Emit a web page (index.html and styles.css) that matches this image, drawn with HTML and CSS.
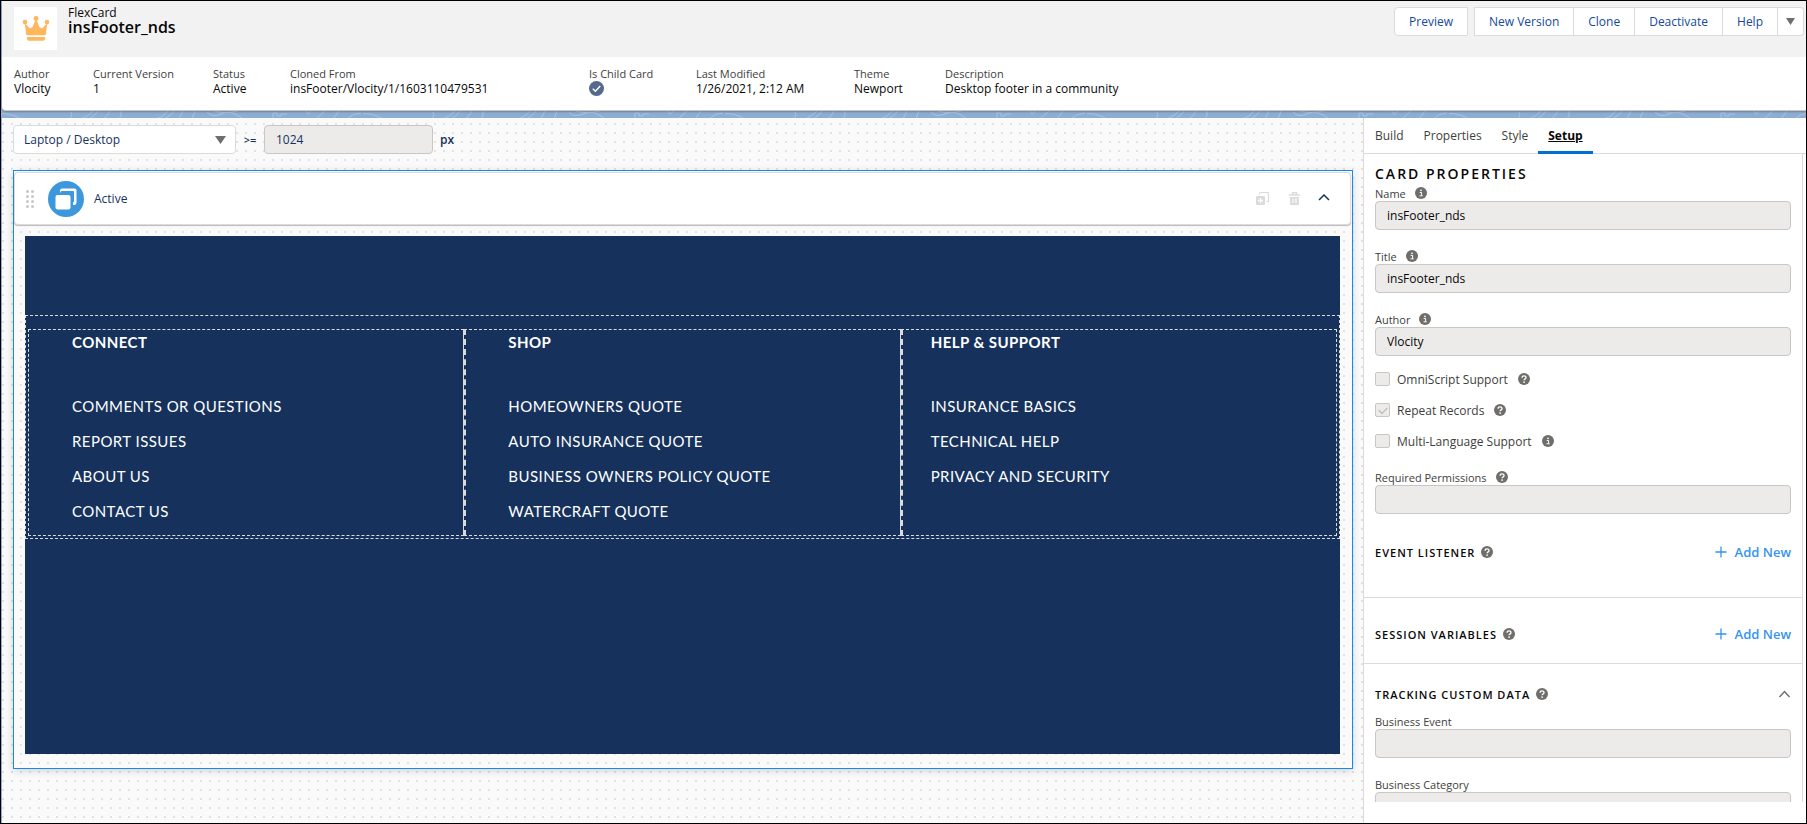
FILE: index.html
```
<!DOCTYPE html>
<html lang="en">
<head>
<meta charset="utf-8">
<title>FlexCard - insFooter_nds</title>
<link rel="stylesheet" href="styles.css">
</head>
<body>
<svg class="sprite" aria-hidden="true">
  <symbol id="info" viewBox="0 0 12 12"><circle cx="6" cy="6" r="6" fill="#706e6b"/><path d="M4.700 5.500h1.900v3M4.500 8.800h3.200" stroke="#fff" stroke-width="1" fill="none"/><circle cx="6" cy="3.300" r=".9" fill="#fff"/></symbol>
  <symbol id="help" viewBox="0 0 12 12"><circle cx="6" cy="6" r="6" fill="#706e6b"/><path d="M4.100 4.700c0-2.400 3.900-2.400 3.900 0C8 6 6.100 5.800 6.100 7.300" stroke="#fff" stroke-width="1.300" fill="none"/><circle cx="6.100" cy="9.100" r=".9" fill="#fff"/></symbol>
  <symbol id="plus" viewBox="0 0 12 12"><path d="M6 .5v11M.5 6h11" stroke="#3693f0" stroke-width="1.300"/></symbol>
</svg>

<div class="app">
  <header class="top">
    <div class="title-row">
      <div class="logo">
        <svg width="28" height="28" viewBox="0 0 26 26" fill="#ffb75d"><path d="M2.600 7.200 6.900 12.200 11.600 11 13 4.500l1.400 6.500 4.700 1.200 4.300-5-1.200 10.600q-.1 1-1.200 1H5q-1.100 0-1.200-1z"/><path d="M9 13.500 12.300 5h1.400L17 13.500z"/><circle cx="13" cy="3.200" r="2.300"/><circle cx="2.800" cy="6.600" r="2.200"/><circle cx="23.200" cy="6.600" r="2.200"/><path d="M4.500 20.500h17v1.500q0 2-2 2h-13q-2 0-2-2z"/></svg>
      </div>
      <div class="title">
        <p class="kind">FlexCard</p>
        <h1>insFooter_nds</h1>
      </div>
      <div class="actions">
        <button type="button" class="btn solo">Preview</button>
        <div class="group">
          <button type="button" class="btn">New Version</button>
          <button type="button" class="btn">Clone</button>
          <button type="button" class="btn">Deactivate</button>
          <button type="button" class="btn">Help</button>
          <button type="button" class="btn more" aria-label="More actions"><svg width="9" height="7" viewBox="0 0 9 7"><path d="M0 0h9L4.500 7z" fill="#706e6b"/></svg></button>
        </div>
      </div>
    </div>
    <dl class="facts">
      <div class="w1"><dt>Author</dt><dd>Vlocity</dd></div>
      <div class="w2"><dt>Current Version</dt><dd>1</dd></div>
      <div class="w3"><dt>Status</dt><dd>Active</dd></div>
      <div class="w4"><dt>Cloned From</dt><dd>insFooter/Vlocity/1/1603110479531</dd></div>
      <div class="w5"><dt>Is Child Card</dt><dd><svg class="tick" width="15" height="15" viewBox="0 0 15 15" role="img" aria-label="Yes"><circle cx="7.500" cy="7.500" r="7.500" fill="#54698d"/><path d="M3.800 7.800 6.400 10.300 11.200 5" stroke="#fff" stroke-width="1.400" fill="none"/></svg></dd></div>
      <div class="w6"><dt>Last Modified</dt><dd>1/26/2021, 2:12 AM</dd></div>
      <div class="w7"><dt>Theme</dt><dd>Newport</dd></div>
      <div><dt>Description</dt><dd>Desktop footer in a community</dd></div>
    </dl>
  </header>

  <svg class="strip" aria-hidden="true">
    <defs><pattern id="topo" width="362" height="8" patternUnits="userSpaceOnUse">
      <g fill="none" stroke="#a9c3e2" stroke-width="1">
        <path d="M-2 3q10-2 22 5M68 8q4-2 2-7M80 8q8-3 12-8M88 8q6-3 9-8M102 8q5-3 7-8M118 8q3-3 2-8M155 8q8-2 12-8M163 8q7-3 10-8M178 8l4-8M191 8l3-8M206 1q5 6 14 2 10-5 22 5M213 0q10 3 24 0M272 8V2h4v3h4V3h6M305 0q2 6 5 0M315 8l9-8M332 8l6-8M346 8q6-6 14-6"/>
      </g></pattern></defs>
    <rect width="100%" height="8" fill="url(#topo)"/>
  </svg>

  <div class="body">
    <main class="canvas">
      <div class="viewport-bar">
        <select class="device" aria-label="Device"><option>Laptop / Desktop</option></select>
        <span class="ge">&gt;=</span>
        <input class="size" type="text" value="1024" aria-label="Minimum width" disabled>
        <span class="px">px</span>
      </div>

      <section class="card">
        <div class="state">
          <svg width="8" height="18" viewBox="0 0 8 18" fill="#c9c7c5"><circle cx="1.500" cy="1.500" r="1.500"/><circle cx="6.500" cy="1.500" r="1.500"/><circle cx="1.500" cy="6.500" r="1.500"/><circle cx="6.500" cy="6.500" r="1.500"/><circle cx="1.500" cy="11.500" r="1.500"/><circle cx="6.500" cy="11.500" r="1.500"/><circle cx="1.500" cy="16.500" r="1.500"/><circle cx="6.500" cy="16.500" r="1.500"/></svg>
          <svg class="badge" width="36" height="36" viewBox="0 0 36 36"><circle cx="18" cy="18" r="18" fill="#3c97dd"/><rect x="7.500" y="14" width="15" height="14.500" rx="2" fill="#fff"/><path d="M12 9.500q0-2 2-2h12.500q2 0 2 2v12q0 2-2 2.500h-1.500v-2.500q1-.2 1-1.200V11q0-1-1-1H13.500q-1 0-1 1.500H12z" fill="#fff"/></svg>
          <span class="state-name">Active</span>
          <button type="button" class="icon" aria-label="Clone"><svg width="13" height="13" viewBox="0 0 13 13"><rect x="0" y="4" width="9" height="9" rx="1" fill="#dddbda"/><path d="M3.500 2.500V1.500q0-1 1-1H11.500q1 0 1 1V8.500q0 1-1 1H10.500" fill="none" stroke="#dddbda" stroke-width="1.200"/><path d="M4.500 6v5M2 8.500h5" stroke="#fff" stroke-width="1.300"/></svg></button>
          <button type="button" class="icon" aria-label="Delete"><svg width="11" height="13" viewBox="0 0 11 13"><path d="M0 3h11M3.500 3V.700h4V3" fill="none" stroke="#dddbda" stroke-width="1.400"/><path d="M1 5h9v7q0 1-1 1H2q-1 0-1-1z" fill="#dddbda"/><path d="M4 6.500v4.500M7 6.500v4.500" stroke="#fff" stroke-width="1.200"/></svg></button>
          <button type="button" class="icon" aria-label="Collapse"><svg width="12" height="12" viewBox="0 0 12 12"><path d="M1 7 6 2 11 7" fill="none" stroke="#16325c" stroke-width="1.500"/></svg></button>
        </div>

        <div class="footer">
          <div class="block">
            <div class="cols">
              <div class="col">
                <h2>CONNECT</h2>
                <ul><li>COMMENTS OR QUESTIONS</li><li>REPORT ISSUES</li><li>ABOUT US</li><li>CONTACT US</li></ul>
              </div>
              <div class="col">
                <h2>SHOP</h2>
                <ul><li>HOMEOWNERS QUOTE</li><li>AUTO INSURANCE QUOTE</li><li>BUSINESS OWNERS POLICY QUOTE</li><li>WATERCRAFT QUOTE</li></ul>
              </div>
              <div class="col last">
                <h2>HELP &amp; SUPPORT</h2>
                <ul><li>INSURANCE BASICS</li><li>TECHNICAL HELP</li><li>PRIVACY AND SECURITY</li></ul>
              </div>
            </div>
          </div>
        </div>
      </section>
    </main>

    <aside class="panel">
      <nav class="tabs">
        <a href="#build">Build</a><a href="#properties">Properties</a><a href="#style">Style</a><a href="#setup" class="on">Setup</a>
      </nav>
      <div class="scroll">
        <section class="props">
          <h2 class="big">CARD PROPERTIES</h2>
          <div class="field"><label for="name">Name <svg class="q"><use href="#info"/></svg></label><input id="name" type="text" value="insFooter_nds" disabled></div>
          <div class="field"><label for="title">Title <svg class="q"><use href="#info"/></svg></label><input id="title" type="text" value="insFooter_nds" disabled></div>
          <div class="field"><label for="author">Author <svg class="q"><use href="#info"/></svg></label><input id="author" type="text" value="Vlocity" disabled></div>
          <div class="checks">
            <label><input type="checkbox" disabled>OmniScript Support <svg class="q"><use href="#help"/></svg></label>
            <label><input type="checkbox" checked disabled>Repeat Records <svg class="q"><use href="#help"/></svg></label>
            <label><input type="checkbox" disabled>Multi-Language Support <svg class="q"><use href="#info"/></svg></label>
          </div>
          <div class="field"><label for="perm">Required Permissions <svg class="q"><use href="#help"/></svg></label><input id="perm" type="text" disabled></div>
        </section>
        <section class="row events">
          <h3>EVENT LISTENER <svg class="q"><use href="#help"/></svg></h3>
          <button type="button" class="add"><svg width="12" height="12"><use href="#plus"/></svg>Add New</button>
        </section>
        <section class="row session">
          <h3>SESSION VARIABLES <svg class="q"><use href="#help"/></svg></h3>
          <button type="button" class="add"><svg width="12" height="12"><use href="#plus"/></svg>Add New</button>
        </section>
        <section class="tracking">
          <div class="tracking-head">
            <h3>TRACKING CUSTOM DATA <svg class="q"><use href="#help"/></svg></h3>
            <button type="button" class="icon" aria-label="Collapse section"><svg width="13" height="8" viewBox="0 0 12 8"><path d="M1 7 6 1.500 11 7" fill="none" stroke="#706e6b" stroke-width="1.400"/></svg></button>
          </div>
          <div class="field"><label for="event">Business Event</label><input id="event" type="text" disabled></div>
          <div class="field"><label for="category">Business Category</label><input id="category" type="text" disabled></div>
        </section>
      </div>
    </aside>
  </div>
</div>
</body>
</html>
```
FILE: styles.css
```
* { box-sizing: border-box; margin: 0; padding: 0; }

body {
  font: 12px/15px "Open Sans", "Noto Sans", sans-serif;
  color: #080707;
  background: #fff;
}

button, input, select { font: inherit; color: inherit; }
button { background: none; border: 0; }
svg { display: block; flex: none; }
.sprite { position: absolute; width: 0; height: 0; }

.app {
  display: flex;
  flex-direction: column;
  height: 100vh;
  border: 1px solid #000;
  background: #8eadd3;
  overflow: hidden;
}

/* Header */
.top {
  margin-left: 1px;
  background: #fff;
  border-bottom: 1px solid #c9c7c5;
  border-radius: 0 0 0 4px;
  box-shadow: 0 1px 2px rgba(0, 0, 0, .25);
  z-index: 1;
}
.title-row {
  display: flex;
  height: 56px;
  padding: 6px 2px 0 12px;
  background: #f3f2f2;
}
.logo {
  display: flex;
  align-items: center;
  justify-content: center;
  width: 43px;
  height: 43px;
  background: #fff;
}
.title { padding-left: 11px; }
.kind { font-size: 12px; line-height: 12px; }
h1 { font-size: 16px; line-height: 16px; font-weight: 600; }
.actions { display: flex; gap: 6px; margin-left: auto; }
.group { display: flex; }
.btn {
  height: 29px;
  padding: 0 14px;
  background: #fff;
  border: 1px solid #dddbda;
  color: #14499b;
}
.solo { border-radius: 4px 0 0 4px; }
.group .btn + .btn { border-left: 0; }
.group .btn.more { padding: 0 8px; border-radius: 0 4px 4px 0; }

.facts { display: flex; height: 53px; padding: 9px 12px 0; }
.facts dt { font-size: 11px; line-height: 15px; color: #3e3e3c; }
.facts dd { line-height: 15px; }
.w1 { width: 79px; }
.w2 { width: 120px; }
.w3 { width: 77px; }
.w4 { width: 299px; }
.w5 { width: 107px; }
.w6 { width: 158px; }
.w7 { width: 91px; }

.strip { width: 100%; height: 7px; }

/* Canvas */
.body { display: flex; flex: 1; min-height: 0; margin-left: 1px; }
.canvas {
  flex: 1;
  min-width: 0;
  padding: 7px 10px 0 11px;
  background: #fafafa radial-gradient(circle at 1px 6px, #e2e2e2 1px, transparent 1px) 0 0 / 9px 9px;
}
.viewport-bar {
  display: flex;
  align-items: center;
  color: #16325c;
}
.device {
  width: 223px;
  height: 29px;
  padding: 0 10px;
  border: 1px solid #dddbda;
  border-radius: 4px;
  appearance: none;
  background: url("data:image/svg+xml,%3Csvg xmlns='http://www.w3.org/2000/svg' width='11' height='8'%3E%3Cpath d='M0 0h11L5.5 8z' fill='%23706e6b'/%3E%3C/svg%3E") no-repeat right 9px center #fff;
}
.ge { width: 28px; text-align: center; font-size: 11px; font-weight: 600; }
.size, .field input {
  height: 29px;
  padding: 0 11px;
  border: 1px solid #c9c7c5;
  border-radius: 4px;
  background: #ecebea;
}
.size { width: 169px; color: #16325c; }
.px { padding-left: 7px; font-weight: 600; }

.card {
  height: 599px;
  margin-top: 16px;
  border: 1px solid #1589ee;
  box-shadow: 0 2px 8px rgba(0, 0, 0, .15);
}
.state {
  display: flex;
  align-items: center;
  height: 53px;
  margin: 1px 1px 0 0;
  padding: 0 20px 0 11px;
  background: #fff;
  border: 1px solid #dddbda;
  border-radius: 4px;
  box-shadow: 0 1px 1px rgba(0, 0, 0, .25);
}
.badge { margin-left: 14px; }
.state-name { margin: 0 auto 0 10px; color: #16325c; font-size: 12px; }
.state .icon + .icon { margin-left: 20px; }
.state .icon:last-child { margin-left: 18px; }

.footer {
  height: 518px;
  margin: 11px 12px 0 11px;
  padding-top: 79px;
  background: #16325c;
  color: #fff;
  font-family: Lato, "Open Sans", sans-serif;
  font-size: 15px;
  letter-spacing: .03em;
}
.block { border: 1px dashed #dddbda; padding: 13px 2px 2px; }
.cols { display: grid; grid-template-columns: 1fr 1fr 1fr; }
.col {
  height: 207px;
  padding: 2px 42px 0;
  border: 1px dashed #dddbda;
}
.col:first-child { padding-left: 43px; }
.col + .col { border-left-width: 2px; }
.col:not(.last) { border-right-style: solid; }
.col.last { padding-left: 28px; }
.col h2 { font-size: 15px; line-height: 20px; font-weight: 700; margin-bottom: 37px; }
.col ul { list-style: none; }
.col li { line-height: 35px; }

/* Side panel */
.panel {
  display: flex;
  flex-direction: column;
  width: 443px;
  padding-bottom: 21px;
  background: #fff;
  border-left: 1px solid #dddbda;
  color: #3e3e3c;
}
.tabs { display: flex; height: 36px; padding-left: 1px; border-bottom: 1px solid #dddbda; }
.tabs a {
  height: 36px;
  padding: 0 10px;
  line-height: 36px;
  color: #3e3e3c;
  text-decoration: none;
}
.tabs .on {
  font-weight: 700;
  color: #080707;
  text-decoration: underline;
  border-bottom: 3px solid #0070d2;
}
.scroll { flex: 1; min-height: 0; overflow: hidden; margin-right: 3px; border-right: 1px solid #dddbda; }
.props { padding: 12px 11px 0; }
.big { margin-bottom: 3px; font-size: 14px; line-height: 16px; font-weight: 600; letter-spacing: 2px; color: #080707; }
.field { display: flex; flex-direction: column; margin-bottom: 18px; }
.field label { display: flex; align-items: center; gap: 9px; height: 16px; font-size: 11px; }
.field input { width: 100%; color: #080707; }
.q { width: 12px; height: 12px; }
.checks { display: flex; flex-direction: column; gap: 17px; margin: -2px 0 21px; }
.checks label { display: flex; align-items: center; gap: 10px; height: 14px; }
.checks input {
  appearance: none;
  width: 15px;
  height: 14px;
  margin-right: -3px;
  border: 1px solid #c9c7c5;
  border-radius: 2px;
  background: #ecebea;
}
.checks input:checked::before {
  content: "";
  display: block;
  width: 7px;
  height: 4px;
  margin: 3px;
  border: solid #b0adab;
  border-width: 0 0 1px 1px;
  transform: rotate(-45deg);
}
.row { display: flex; justify-content: space-between; padding: 0 11px; border-bottom: 1px solid #dddbda; }
.events { height: 66px; padding-top: 12px; }
.session { height: 66px; padding-top: 28px; }
h3 { display: flex; align-items: center; gap: 6px; height: 16px; font-size: 11px; font-weight: 600; letter-spacing: 1px; color: #080707; }
.add { display: flex; align-items: center; gap: 8px; height: 16px; font-size: 13px; font-weight: 600; color: #3693f0; }
.tracking { padding: 22px 11px 0; }
.tracking-head { display: flex; justify-content: space-between; margin-bottom: 11px; }
```
